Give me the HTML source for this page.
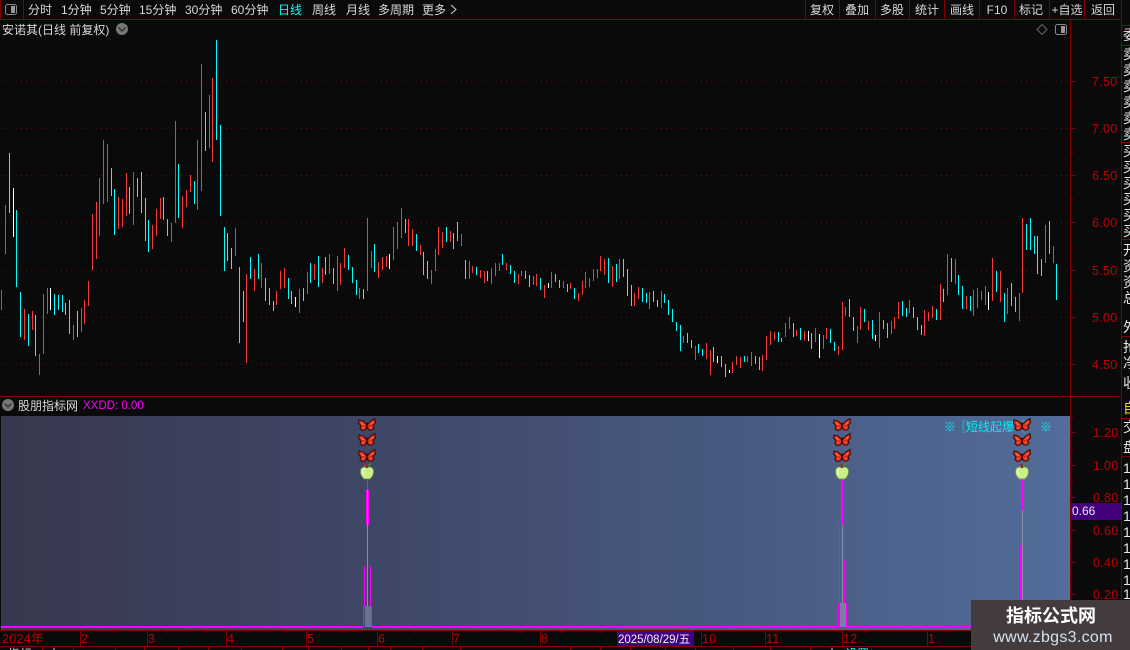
<!DOCTYPE html>
<html><head><meta charset="utf-8"><title>K</title>
<style>
html,body{margin:0;padding:0;background:#0a0a0a;width:1130px;height:650px;overflow:hidden}
svg{display:block}
text{font-family:"Liberation Sans","WenQuanYi Zen Hei","Noto Sans CJK SC",sans-serif;font-size:12px;fill:#d8d8d8;white-space:pre}
.c{text-anchor:middle}
.ax{fill:#c00000;font-size:12.5px;letter-spacing:.3px}
.k path{fill:none;stroke-width:3;shape-rendering:crispEdges}
.l{stroke:#800000;stroke-width:1;shape-rendering:crispEdges;fill:none}
.m{stroke:#f0f;stroke-width:1;shape-rendering:crispEdges;fill:none}
.g{stroke:#620c0c;stroke-width:1;stroke-dasharray:1 4;fill:none;shape-rendering:crispEdges}
.col{fill:#e8e8e8;font-size:14px}
.t{fill:#00f0f8;font-size:12px}
</style></head><body>
<svg width="1130" height="650" viewBox="0 0 1130 650" xmlns="http://www.w3.org/2000/svg">
<defs>
<linearGradient id="bg" x1="0" x2="1" y1="0" y2="0"><stop offset="0" stop-color="#38384e"/><stop offset=".35" stop-color="#3f4767"/><stop offset=".65" stop-color="#47587f"/><stop offset="1" stop-color="#536c99"/></linearGradient>
<clipPath id="cc"><rect x="1122" y="20" width="8" height="630"/></clipPath>
<clipPath id="cb"><rect x="0" y="647" width="1130" height="3"/></clipPath>
<g id="bf">
<path d="M0,0 L-4,-4 L-8,-5 L-8.500,-2 L-6,1 L-7,3.500 L-5,5.500 L-2,5 L0,2 L2,5 L5,5 L7,3 L6,.5 L8.500,-2 L8,-6.500 L4,-4 Z" fill="#dd2f1c" stroke="#3e0d07" stroke-width="1.100" stroke-linejoin="round"/>
<path d="M-2,0 L-4.500,-2.500 L-6.500,-3 L-5,0 Z M2,0 L4.500,-2.500 L6.500,-4.500 L6,-1.500 Z M-2,2 L-5,2.500 L-4,4 Z M2,2 L5,2.500 L4,4 Z" fill="#ff6636"/>
<path d="M0,-2.500 V4" stroke="#2a0804" stroke-width="1.400"/>
</g>
<g id="ap">
<path d="M0,-5 C-2,-7 -6.500,-6 -6.500,-1.500 C-6.500,3 -3,6.500 -1.500,6 C-.5,5.600 .5,5.600 1.500,6 C3,6.500 6.500,3 6.500,-1.500 C6.500,-6 2,-7 0,-5 Z" fill="#c9ef85" stroke="#7b9a45" stroke-width=".7"/>
<path d="M-3,-4 C-4.500,-3 -4.500,0 -3,2" stroke="#eafcc0" stroke-width="1.500" fill="none"/>
<path d="M0,-5 L-.5,-9" stroke="#6a2a1a" stroke-width="1.500"/>
<path d="M0,-7 Q2,-10 5,-10 Q3,-7 0,-7 Z" fill="#4f8a28"/>
<circle cx="-1.500" cy="-8" r="1.200" fill="#b0304a"/>
</g>
</defs>
<rect width="1130" height="650" fill="#0a0a0a"/>

<!-- top toolbar -->
<path class="l" d="M0,19.500H1121.500M0.500,0V19M23.500,0V19M805.500,0V19M839.500,0V19M875.500,0V19M909.500,0V19M944.500,0V19M979.500,0V19M1014.500,0V19M1049.500,0V19M1084.500,0V19M1121.500,0V650"/>
<rect x="5.500" y="4.500" width="11" height="10" rx="2" fill="none" stroke="#888"/><rect x="11" y="6" width="4" height="7" fill="#999"/>
<text x="28" y="14">分时</text><text x="61" y="14">1分钟</text><text x="100" y="14">5分钟</text><text x="139" y="14">15分钟</text><text x="185" y="14">30分钟</text><text x="231" y="14">60分钟</text>
<text x="278" y="14" style="fill:#0ff">日线</text><text x="312" y="14">周线</text><text x="346" y="14">月线</text><text x="378" y="14">多周期</text><text x="422" y="14">更多</text>
<path d="M451,5L456,9.500L451,14" fill="none" stroke="#ccc"/>
<text class="c" x="822" y="14">复权</text><text class="c" x="857" y="14">叠加</text><text class="c" x="892" y="14">多股</text><text class="c" x="927" y="14">统计</text><text class="c" x="962" y="14">画线</text><text class="c" x="997" y="14">F10</text><text class="c" x="1031" y="14">标记</text><text class="c" x="1067" y="14">+自选</text><text class="c" x="1103" y="14">返回</text>

<!-- title -->
<text x="2" y="34">安诺其(日线 前复权)</text>
<circle cx="122" cy="29" r="6" fill="#777"/><path d="M118.500,27.500L122,31L125.500,27.500" fill="none" stroke="#222" stroke-width="1.200"/>
<path d="M1042,24.500L1047,29.500L1042,34.500L1037,29.500Z" fill="none" stroke="#666"/>
<rect x="1055.500" y="24.500" width="11" height="10" rx="2" fill="none" stroke="#888"/><rect x="1061" y="26" width="4" height="7" fill="#999"/>

<!-- grid -->
<path class="g" d="M1,81.500H1070M1,128.500H1070M1,175.500H1070M1,222.500H1070M1,270.500H1070M1,317.500H1070M1,364.500H1070"/>

<!-- candles -->
<g class="k" transform="translate(.17,130) scale(.33333)">
<path stroke="#f53a3a" d="M4 480V540M16 225V372M73 537V630M97 543V600M118 672V735M130 492V672M142 474V552M220 585V630M244 534V606M253 510V582M265 453V528M277 252V420M289 216V387M298 144V318M310 30V222M322 42V216M355 201V297M367 207V291M379 129V258M400 126V285M457 285V357M469 237V318M481 204V267M514 279V336M526 -27V279M547 198V294M559 180V231M571 135V186M592 30V240M604 -198V183M628 -105V54M637 -156V96M706 294V378M739 432V699M763 417V483M784 399V474M829 483V525"/>
<path stroke="#00ffff" d="M28 69V249M49 240V471M61 486V621M85 552V648M106 555V678M163 492V555M175 495V540M187 495V546M196 519V555M208 510V612M232 543V621M334 114V198M343 177V315M388 171V252M412 144V201M424 126V249M436 204V333M445 270V366M490 201V270M502 267V318M535 102V264M583 153V222M616 -54V63M649 -270V30M661 -15V258M673 291V423M682 309V393M694 354V417M718 411V639M730 483V576M751 381V447M775 372V447M796 444V513M808 474V525M820 513V543"/>
<path stroke="#ffffff" d="M40 174V321M151 474V540"/>
</g>
<g class="k" transform="translate(280.17,200) scale(.33333)">
<path stroke="#f53a3a" d="M1 213V267M13 204V264M58 267V339M82 216V282M103 192V240M127 204V249M148 162V222M172 168V273M181 189V255M193 144V204M238 264V297M262 54V273M274 153V204M295 186V234M307 171V210M319 168V201M340 81V180M352 66V147M364 24V114M385 57V138M397 87V138M421 135V165M454 210V252M466 147V213M475 81V165M487 96V144M511 93V126M544 102V138M568 183V237M577 198V219M601 210V234M613 213V249M634 204V252M646 189V228M658 189V213M679 189V210M715 222V252M724 213V228M760 228V255M769 222V258M793 255V294M814 216V264M850 243V264M871 249V267M895 279V303M907 243V285M916 216V264M928 234V261M940 207V243M952 207V234M961 168V213M973 177V225M997 198V261M1018 177V237M1063 279V318M1075 261V297M1108 276V327M1144 273V324"/>
<path stroke="#00ffff" d="M25 234V297M34 273V312M70 264V303M91 189V249M115 168V261M136 171V225M160 204V252M205 165V210M217 201V249M229 240V285M250 267V297M283 132V216M376 57V99M409 102V153M430 156V225M442 183V237M499 81V126M520 99V147M532 66V123M556 180V237M589 201V225M622 213V243M667 162V195M691 195V222M703 213V249M736 213V237M748 225V261M781 234V270M826 222V246M838 240V264M862 252V276M883 264V297M985 174V249M1009 192V246M1030 177V231M1042 207V288M1054 255V318M1087 264V306M1099 279V309M1120 273V306M1132 300V321M1153 282V309M1165 300V345M1177 327V366M1189 366V393"/>
<path stroke="#ffffff" d="M46 291V321M328 162V207M805 249V264"/>
</g>
<g class="k" transform="translate(660.17,200) scale(.33333)">
<path stroke="#f53a3a" d="M70 408V429M106 438V480M139 429V477M151 450V525M217 486V519M229 468V495M241 471V504M262 468V486M274 456V498M307 465V513M319 408V480M331 393V435M343 396V420M376 369V411M388 351V387M409 390V408M433 393V423M466 384V426M490 405V447M499 384V417M535 438V465M547 306V450M556 321V348M592 378V429M601 321V390M625 363V390M658 336V444M694 363V402M703 351V387M715 306V357M748 300V339M793 330V408M805 336V363M817 318V354M841 252V360M862 162V285M886 177V252M919 288V327M940 270V348M952 264V324M964 273V300M976 258V315M997 174V303M1021 213V306M1042 264V342M1078 279V363M1087 54V279M1156 75V189M1180 138V189"/>
<path stroke="#00ffff" d="M61 375V453M82 399V429M94 420V444M115 432V459M127 447V468M160 441V486M184 468V501M196 492V531M253 468V486M286 468V492M298 471V510M355 396V426M364 414V426M400 369V411M421 384V420M454 399V447M511 387V429M523 426V453M568 297V351M580 351V393M613 327V366M637 360V417M670 360V387M682 369V414M727 303V348M739 324V351M760 321V354M772 351V390M784 375V405M829 327V360M850 267V306M874 174V246M895 225V285M907 258V327M931 288V333M1009 213V276M1033 279V366M1054 249V318M1066 291V336M1099 72V150M1111 54V150M1123 108V162M1132 108V222M1144 177V228M1168 63V162M1189 192V300"/>
<path stroke="#ffffff" d="M172 468V489M208 510V519M445 393V423M478 402V474M646 405V423M985 276V330"/>
</g>

<!-- right axis top -->
<path class="l" d="M1070.500,19V630M1070,81.500H1076M1070,128.500H1076M1070,175.500H1076M1070,222.500H1076M1070,270.500H1076M1070,317.500H1076M1070,364.500H1076M1070,105.500H1073M1070,152.500H1073M1070,199.500H1073M1070,246.500H1073M1070,294.500H1073M1070,341.500H1073"/>
<text class="ax" x="1092" y="86">7.50</text><text class="ax" x="1092" y="133">7.00</text><text class="ax" x="1092" y="180">6.50</text><text class="ax" x="1092" y="227">6.00</text><text class="ax" x="1092" y="275">5.50</text><text class="ax" x="1092" y="322">5.00</text><text class="ax" x="1092" y="369">4.50</text>

<!-- right column -->
<g clip-path="url(#cc)">
<text class="col" x="1123" y="40">委</text>
<text class="col" x="1123" y="59">卖</text><text class="col" x="1123" y="75">卖</text><text class="col" x="1123" y="91">卖</text><text class="col" x="1123" y="107">卖</text><text class="col" x="1123" y="123">卖</text><text class="col" x="1123" y="139">卖</text>
<text class="col" x="1123" y="156">买</text><text class="col" x="1123" y="172">买</text><text class="col" x="1123" y="188">买</text><text class="col" x="1123" y="204">买</text><text class="col" x="1123" y="220">买</text><text class="col" x="1123" y="236">买</text>
<text class="col" x="1123" y="255">开</text><text class="col" x="1123" y="271">资</text><text class="col" x="1123" y="287">资</text><text class="col" x="1123" y="303">总</text><text class="col" x="1123" y="332">外</text>
<text class="col" x="1123" y="352">抢</text><text class="col" x="1123" y="368">净</text><text class="col" x="1123" y="388">收</text>
<text class="col" x="1123" y="413" style="fill:#e8e000">自</text><text class="col" x="1123" y="432">交</text><text class="col" x="1123" y="452">盘</text>
<text class="col" x="1123" y="473">1</text><text class="col" x="1123" y="489">1</text><text class="col" x="1123" y="505">1</text><text class="col" x="1123" y="521">1</text><text class="col" x="1123" y="537">1</text><text class="col" x="1123" y="553">1</text><text class="col" x="1123" y="569">1</text><text class="col" x="1123" y="585">1</text><text class="col" x="1123" y="599">1</text>
</g>
<path class="l" d="M1122,25.500H1130M1122,45.500H1130M1122,142.500H1130M1122,239.500H1130M1122,336.500H1130M1122,418.500H1130M1122,456.500H1130"/>

<!-- panel header -->
<path class="l" d="M0,396.500H1121"/>
<circle cx="8" cy="405" r="6" fill="#777"/><path d="M4.500,403.500L8,407L11.500,403.500" fill="none" stroke="#222" stroke-width="1.200"/>
<text x="18" y="410">股朋指标网</text>
<text x="83" y="409" style="fill:#f0f;font-size:11.500px">XXDD: 0.00</text>

<!-- indicator panel -->
<rect x="1" y="416" width="1069" height="214" fill="url(#bg)"/>
<path class="m" d="M1,626.500H363M372,626.500H838M847,626.500H1070M1,627.500H363M372,627.500H838M847,627.500H1070"/>

<!-- spike 1 -->
<path d="M367.500,478V606" stroke="#8a8fa8" stroke-width="1" shape-rendering="crispEdges"/>
<rect x="365" y="606" width="6" height="21" fill="#6a7390"/>
<path class="m" d="M363.500,606V627M371.500,606V627M364.500,566V606M370.500,566V606M364,606H365M370,606H371M367.500,478V490M366.500,490V525M368.500,490V525"/>
<!-- spike 2 -->
<path d="M842.500,478V603" stroke="#8a8fa8" stroke-width="1" shape-rendering="crispEdges"/>
<rect x="840" y="603" width="6" height="24" fill="#7582a2"/>
<path class="m" d="M838.500,603V627M846.500,603V627M839.500,525V603M841.500,480V525M842.500,480V525M844.500,560V603"/>
<!-- spike 3 -->
<path d="M1022.500,478V600" stroke="#8a8fa8" stroke-width="1" shape-rendering="crispEdges"/>
<path class="m" d="M1023.500,480V525M1022.500,480V510M1025.500,525V565M1020.500,545V600M1025.500,565V600"/>

<text class="t" x="944" y="431">※</text><text class="t" x="955" y="431">〖</text><text class="t" x="966" y="431">短线起爆</text><text class="t" x="1022" y="431">〗</text><text class="t" x="1040" y="431">※</text>

<use href="#bf" x="367" y="425"/><use href="#bf" x="367" y="440"/><use href="#bf" x="367" y="456"/><use href="#ap" x="367" y="473"/>
<use href="#bf" x="842" y="425"/><use href="#bf" x="842" y="440"/><use href="#bf" x="842" y="456"/><use href="#ap" x="842" y="473"/>
<use href="#bf" x="1022" y="425"/><use href="#bf" x="1022" y="440"/><use href="#bf" x="1022" y="456"/><use href="#ap" x="1022" y="473"/>

<!-- lower axis -->
<path class="l" d="M1070,432.500H1076M1070,465.500H1076M1070,497.500H1076M1070,530.500H1076M1070,562.500H1076M1070,594.500H1076M1070,416.500H1073M1070,449.500H1073M1070,481.500H1073M1070,546.500H1073M1070,578.500H1073"/>
<text class="ax" x="1093" y="437">1.20</text><text class="ax" x="1093" y="470">1.00</text><text class="ax" x="1093" y="502">0.80</text><text class="ax" x="1093" y="535">0.60</text><text class="ax" x="1093" y="567">0.40</text><text class="ax" x="1093" y="599">0.20</text>
<rect x="1071" y="503" width="50" height="17" fill="#42007e"/>
<text x="1072" y="515" style="fill:#e8e8e8">0.66</text>

<!-- bottom axis -->
<path class="l" d="M0,630.500H1121M0,646.500H1130M80.500,631V646M147.500,631V646M226.500,631V646M306.500,631V646M377.500,631V646M452.500,631V646M540.500,631V646M701.500,631V646M765.500,631V646M842.500,631V646M927.500,631V646"/>
<path class="l" d="M97.500,631V633M114.500,631V633M167.500,631V633M187.500,631V633M206.500,631V633M246.500,631V633M266.500,631V633M286.500,631V633M324.500,631V633M342.500,631V633M358.500,631V633M395.500,631V633M415.500,631V633M433.500,631V633M474.500,631V633M497.500,631V633M520.500,631V633M560.500,631V633M580.500,631V633M600.500,631V633M650.500,631V633M730.500,631V633M785.500,631V633M805.500,631V633M864.500,631V633M907.500,631V633M946.500,631V633"/>
<text class="ax" x="2" y="643" style="font-size:12.500px">2024年</text>
<text class="ax" x="81" y="643">2</text><text class="ax" x="148" y="643">3</text><text class="ax" x="227" y="643">4</text><text class="ax" x="307" y="643">5</text><text class="ax" x="378" y="643">6</text><text class="ax" x="453" y="643">7</text><text class="ax" x="541" y="643">8</text><text class="ax" x="702" y="643">10</text><text class="ax" x="766" y="643">11</text><text class="ax" x="843" y="643">12</text><text class="ax" x="928" y="643">1</text>
<rect x="617" y="631" width="77" height="15" fill="#42007e"/>
<text x="618" y="643" style="fill:#f0f0f0;font-size:11.500px">2025/08/29/五</text>

<!-- bottom tab fragment -->
<path class="l" d="M42.500,647V650M73.500,647V650M115.500,647V650M144.500,647V650M178.500,647V650M208.500,647V650M241.500,647V650M282.500,647V650M308.500,647V650M341.500,647V650M368.500,647V650M390.500,647V650M422.500,647V650M460.500,647V650M570.500,647V650M600.500,647V650M630.500,647V650M665.500,647V650M695.500,647V650M733.500,647V650M770.500,647V650M810.500,647V650M871.500,647V650"/>
<g clip-path="url(#cb)">
<text x="8" y="658">指标</text><text x="48" y="658">十</text><text x="826" y="658">十</text><text x="845" y="658" style="fill:#0ff">设置</text>
</g>

<!-- watermark -->
<rect x="971" y="600" width="159" height="50" fill="#443c3c"/>
<text class="c" x="1051" y="622" style="fill:#fff;font-size:18px;font-weight:bold">指标公式网</text>
<text class="c" x="1053" y="642" style="fill:#d4e2f4;font-size:16px;letter-spacing:.3px">www.zbgs3.com</text>
</svg>
</body></html>
